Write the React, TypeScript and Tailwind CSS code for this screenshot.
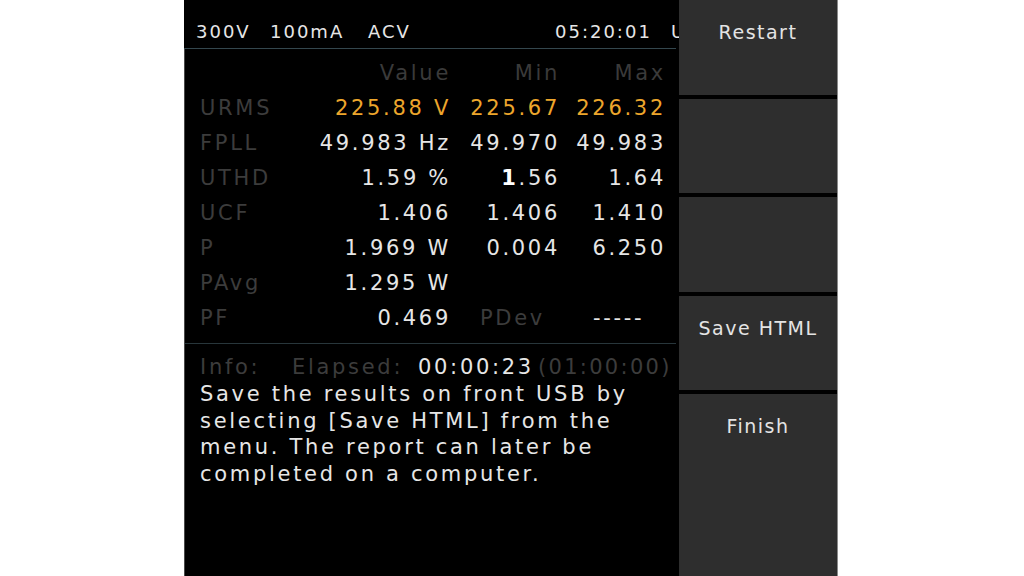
import React from "react";

const rows = [
  { label: "URMS", value: "225.88 V", min: "225.67", max: "226.32", hot: true },
  { label: "FPLL", value: "49.983 Hz", min: "49.970", max: "49.983" },
  { label: "UTHD", value: "1.59 %", min: "bold", max: "1.64" },
  { label: "UCF", value: "1.406", min: "1.406", max: "1.410" },
  { label: "P", value: "1.969 W", min: "0.004", max: "6.250" },
  { label: "PAvg", value: "1.295 W", min: "", max: "" },
];

const SoftKey = ({ label, h }: { label?: string; h: string }) => (
  <div className={`${h} bg-[#2e2e2e] text-center text-[19px] leading-[20px] tracking-[1.5px] text-[#e4e4e4] pt-[22px]`}>
    {label}
  </div>
);

const App = () => {
  return (
    <div className="w-[1024px] h-[576px] bg-white flex overflow-hidden" style={{ fontFamily: "'DejaVu Sans', sans-serif" }}>
      <div className="w-[184px] shrink-0" />
      <div className="w-[495px] shrink-0 bg-black flex flex-col overflow-hidden text-[#e6e6e6] text-[21px] tracking-[2.7px]">
        {/* status line */}
        <div className="h-[48px] shrink-0 flex pl-[12px] pt-[22px] text-[18px] leading-[20px] tracking-[2px] whitespace-nowrap overflow-hidden">
          <span className="w-[74px] shrink-0">300V</span>
          <span className="w-[98px] shrink-0">100mA</span>
          <span className="w-[187px] shrink-0">ACV</span>
          <span className="w-[116px] shrink-0">05:20:01</span>
          <span className="w-[8px] shrink-0 overflow-hidden">U</span>
        </div>
        <div className="h-px shrink-0 bg-[#34474e] mr-[3px]" />

        <div className="flex-1 flex flex-col border-l border-[#4a4a4a]">
          {/* table */}
          <div className="pl-[15px] pt-[7px] grid grid-cols-[113px_138px_109px_106px] leading-[35px] whitespace-nowrap">
            <div />
            <div className="text-right text-[#3a3a3a]">Value</div>
            <div className="text-right text-[#3a3a3a]">Min</div>
            <div className="text-right text-[#3a3a3a]">Max</div>
            {rows.map((r) => (
              <React.Fragment key={r.label}>
                <div className="text-[#3c3c3c]">{r.label}</div>
                <div className={`text-right ${r.hot ? "text-[#eda62c]" : ""}`}>{r.value}</div>
                <div className={`text-right ${r.hot ? "text-[#eda62c]" : ""}`}>
                  {r.min === "bold" ? (
                    <>
                      <span className="font-bold text-white">1</span>.56
                    </>
                  ) : (
                    r.min
                  )}
                </div>
                <div className={`text-right ${r.hot ? "text-[#eda62c]" : ""}`}>{r.max}</div>
              </React.Fragment>
            ))}
            <div className="text-[#3c3c3c]">PF</div>
            <div className="text-right">0.469</div>
            <div className="pl-[29px] text-[#3c3c3c]">PDev</div>
            <div className="pl-[33px]">-----</div>
          </div>
          <div className="h-px bg-[#28363b] mt-[7px] mr-[3px]" />

          {/* info */}
          <div className="pl-[15px] pt-[10px] flex leading-[27px] whitespace-nowrap">
            <span className="w-[92px] shrink-0 text-[#3c3c3c]">Info:</span>
            <span className="w-[126px] shrink-0 text-[#3c3c3c]">Elapsed:</span>
            <span className="w-[120px] shrink-0">00:00:23</span>
            <span className="shrink-0 text-[#3c3c3c] tracking-[2.3px]">(01:00:00)</span>
          </div>
          <p className="pl-[15px] leading-[26.7px] whitespace-nowrap">
            Save the results on front USB by
            <br />
            selecting [Save HTML] from the
            <br />
            menu. The report can later be
            <br />
            completed on a computer.
          </p>
        </div>
      </div>

      {/* soft keys */}
      <div className="w-[159px] shrink-0 bg-black flex flex-col gap-[4px] border-r border-[#8a8a8a]">
        <SoftKey label="Restart" h="h-[95px]" />
        <SoftKey h="h-[94px]" />
        <SoftKey h="h-[95px]" />
        <SoftKey label="Save HTML" h="h-[94px]" />
        <SoftKey label="Finish" h="flex-1" />
      </div>
    </div>
  );
};

export default App;
